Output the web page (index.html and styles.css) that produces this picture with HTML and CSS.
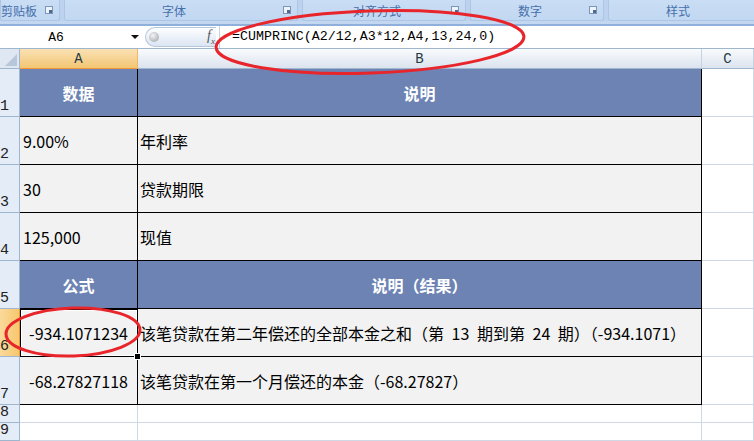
FILE: index.html
```html
<!DOCTYPE html>
<html lang="zh-CN">
<head>
    <meta charset="UTF-8">
    <title>CUMPRINC</title>
    <link rel="stylesheet" href="styles.css">
</head>
<body>
    <!-- Ribbon group labels -->
    <div class="ribbon">
        <div class="group clip"><span class="label">剪贴板</span><i class="launcher"></i></div>
        <div class="group font"><span class="label">字体</span><i class="launcher"></i></div>
        <div class="group align"><span class="label">对齐方式</span><i class="launcher"></i></div>
        <div class="group number"><span class="label">数字</span><i class="launcher"></i></div>
        <div class="group styles"><span class="label">样式</span></div>
    </div>
    <div class="ribbon-foot"></div>

    <!-- Formula bar -->
    <div class="formula-bar">
        <div class="namebox"><span class="name">A6</span><i class="arrow"></i></div>
        <div class="fx-btn"><i class="knob"></i><span class="fx">f<sub>x</sub></span></div>
        <div class="formula">=CUMPRINC(A2/12,A3*12,A4,13,24,0)</div>
    </div>

    <!-- Sheet -->
    <div class="sheet">
        <div class="corner"></div>
        <div class="colhead active">A</div>
        <div class="colhead">B</div>
        <div class="colhead">C</div>

        <div class="rowhead"><span>1</span></div>
        <div class="cell th">数据</div>
        <div class="cell th">说明</div>
        <div class="cell"></div>

        <div class="rowhead"><span>2</span></div>
        <div class="cell td left">9.00%</div>
        <div class="cell td desc">年利率</div>
        <div class="cell"></div>

        <div class="rowhead"><span>3</span></div>
        <div class="cell td left">30</div>
        <div class="cell td desc">贷款期限</div>
        <div class="cell"></div>

        <div class="rowhead"><span>4</span></div>
        <div class="cell td left">125,000</div>
        <div class="cell td desc">现值</div>
        <div class="cell"></div>

        <div class="rowhead"><span>5</span></div>
        <div class="cell th">公式</div>
        <div class="cell th">说明（结果）</div>
        <div class="cell"></div>

        <div class="rowhead active"><span>6</span></div>
        <div class="cell td center selected">-934.1071234</div>
        <div class="cell td desc">该笔贷款在第二年偿还的全部本金之和（第 13 期到第 24 期）（-934.1071）</div>
        <div class="cell"></div>

        <div class="rowhead"><span>7</span></div>
        <div class="cell td center">-68.27827118</div>
        <div class="cell td desc">该笔贷款在第一个月偿还的本金（-68.27827）</div>
        <div class="cell"></div>

        <div class="rowhead"><span>8</span></div>
        <div class="cell"></div>
        <div class="cell"></div>
        <div class="cell"></div>

        <div class="rowhead"><span>9</span></div>
        <div class="cell"></div>
        <div class="cell"></div>
        <div class="cell"></div>
    </div>

    <!-- Red hand-drawn marks -->
    <svg class="marks" width="754" height="441" viewBox="0 0 754 441">
        <ellipse cx="370" cy="42" rx="154" ry="31" transform="rotate(-2 370 42)" />
        <ellipse cx="73" cy="332" rx="67" ry="24" transform="rotate(-2 73 332)" />
    </svg>
</body>
</html>
```

FILE: styles.css
```css
body {
    margin: 0;
    width: 754px;
    height: 441px;
    overflow: hidden;
    position: relative;
    background-color: #fff;
    font-family: "Noto Sans CJK SC", sans-serif;
}

/* ribbon */
.ribbon {
    display: flex;
    gap: 4px;
    height: 21px;
    background-color: #bcd2ee;
    overflow: hidden;
}
.group {
    display: flex;
    align-items: center;
    flex: none;
    box-sizing: border-box;
    background: linear-gradient(#c9ddf4, #c2d7f1);
    border: 1px solid #adc6e6;
    border-top: none;
    border-radius: 0 0 3px 3px;
    color: #4670ab;
    font-size: 12px;
    padding-right: 6px;
}
.group .label {
    flex: 1;
    text-align: center;
}
.clip { width: 60px; }
.clip .label { text-align: left; }
.font { width: 234px; }
.align { width: 164px; }
.number { width: 134px; }
.styles { width: 170px; padding-right: 30px; }
.launcher {
    width: 6px;
    height: 6px;
    border: 1px solid #7d95b8;
    background-color: #eef4fb;
    position: relative;
}
.launcher::after {
    content: "";
    position: absolute;
    right: 0;
    bottom: 0;
    width: 3px;
    height: 3px;
    background-color: #52688c;
}
.ribbon-foot {
    height: 3px;
    background-color: #c3d7f0;
    border-bottom: 2px solid #8fb0da;
}

/* formula bar */
.formula-bar {
    display: flex;
    align-items: center;
    height: 22px;
    border-bottom: 1px solid #9eb6ce;
    background-color: #fff;
}
.namebox {
    display: flex;
    align-items: center;
    width: 142px;
    flex: none;
}
.namebox .name {
    width: 112px;
    text-align: center;
    font-family: "Liberation Mono", monospace;
    font-size: 13px;
}
.arrow {
    margin-left: 19px;
    border-left: 4px solid transparent;
    border-right: 4px solid transparent;
    border-top: 4px solid #111;
}
.fx-btn {
    display: flex;
    align-items: center;
    justify-content: space-between;
    box-sizing: border-box;
    width: 71px;
    height: 20px;
    margin-left: 3px;
    padding: 0 1px 0 3px;
    background: linear-gradient(#fdfeff, #dbe5f2);
    border: 1px solid #b5c7dd;
    border-right: none;
    border-radius: 10px 0 0 10px;
}
.knob {
    width: 10px;
    height: 10px;
    border-radius: 50%;
    background: radial-gradient(circle at 40% 35%, #f4f4f4, #9a9ea4);
}
.fx {
    font-family: "Liberation Serif", serif;
    font-style: italic;
    font-size: 14px;
    color: #555;
}
.fx sub {
    font-size: 9px;
}
.formula {
    flex: 1;
    height: 22px;
    line-height: 22px;
    margin-left: 3px;
    padding-left: 12px;
    border-left: 1px solid #c5d2e0;
    font-family: "Liberation Mono", monospace;
    font-size: 13.3px;
    color: #000;
}

/* sheet grid */
.sheet {
    display: grid;
    grid-template-columns: 20px 118px 564px 52px;
    grid-template-rows: 20px repeat(7, 48px) 18px 18px;
}
.sheet > div {
    box-sizing: border-box;
    overflow: hidden;
}
.corner {
    position: relative;
    background-color: #dfe7f2;
    border-right: 1px solid #9eb6ce;
    border-bottom: 1px solid #9eb6ce;
}
.corner::after {
    content: "";
    position: absolute;
    right: 2px;
    bottom: 2px;
    border-left: 12px solid transparent;
    border-bottom: 12px solid #b7c6d9;
}
.colhead {
    display: flex;
    align-items: center;
    justify-content: center;
    background: linear-gradient(#f9fbfd, #dbe3ee);
    border-right: 1px solid #c4d2e2;
    border-bottom: 1px solid #9eb6ce;
    font-family: "Liberation Mono", monospace;
    font-size: 14px;
    color: #1f3b44;
}
.colhead.active {
    background: linear-gradient(#fae2b5, #f2c572);
    border-right-color: #f0b860;
    border-bottom-color: #f29536;
}
.rowhead {
    display: flex;
    align-items: flex-end;
    background-color: #e4ecf7;
    border-right: 1px solid #9eb6ce;
    border-bottom: 1px solid #9eb6ce;
    font-family: "Liberation Mono", monospace;
    font-size: 15px;
    line-height: 15px;
    color: #222;
}
.rowhead span {
    padding-bottom: 2px;
}
.rowhead.active {
    background: linear-gradient(90deg, #fbd99a, #f6c86f);
    border-right-color: #f29536;
}
.cell {
    display: flex;
    align-items: center;
    border-right: 1px solid #d0d7e5;
    border-bottom: 1px solid #d0d7e5;
    font-size: 16px;
    white-space: nowrap;
}
.th {
    justify-content: center;
    background-color: #6c83b3;
    color: #fff;
    font-weight: bold;
    border-right-color: #000;
    border-bottom-color: #000;
}
.td {
    background-color: #f2f2f2;
    color: #000;
    border-right-color: #000;
    border-bottom-color: #000;
}
.left {
    padding-left: 3px;
}
.center {
    justify-content: center;
}
.desc {
    padding-left: 2px;
    word-spacing: 4px;
}
.selected {
    position: relative;
    box-shadow: inset 1px 1px 0 #000, inset 2px 2px 0 #fff, inset -1px -1px 0 #fff;
    overflow: visible !important;
}
.selected::after {
    content: "";
    position: absolute;
    right: -4px;
    bottom: -4px;
    width: 5px;
    height: 5px;
    background-color: #000;
    border: 1px solid #fff;
}

/* red marks drawn over the screenshot */
.marks {
    position: absolute;
    left: 0;
    top: 0;
    pointer-events: none;
}
.marks ellipse {
    fill: none;
    stroke: #e8252b;
    stroke-width: 3;
}
```
